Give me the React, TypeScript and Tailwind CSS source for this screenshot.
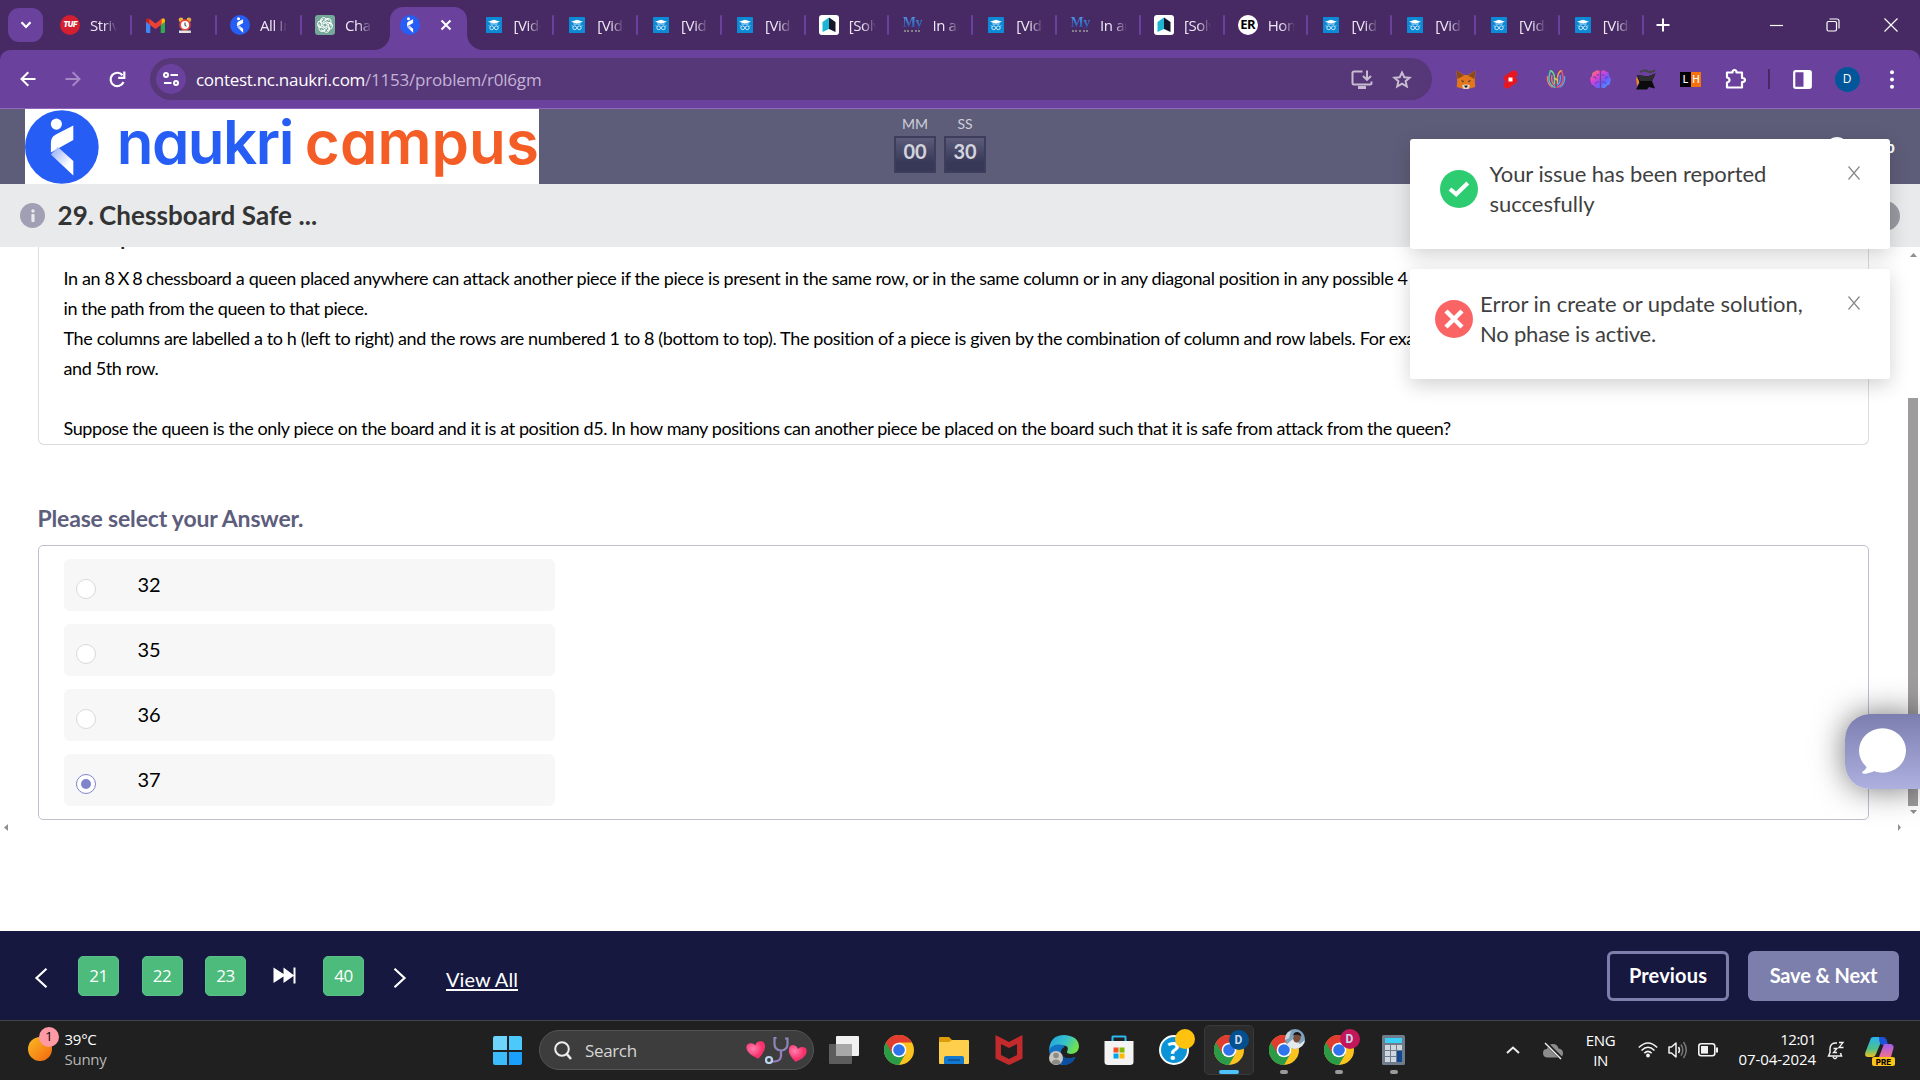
import type { ReactNode } from "react";

/* ---------- favicons ---------- */

function NaukriMark({ size }: { size: number }) {
  return (
    <svg width={size} height={size} viewBox="0 0 74 74">
      <defs>
        <linearGradient id="nk" x1="0" y1="0" x2="1" y2="1">
          <stop offset="0" stopColor="#8ba6f8" />
          <stop offset="0.7" stopColor="#fff" />
        </linearGradient>
      </defs>
      <circle cx="37" cy="37" r="37" fill="#265df5" />
      <circle cx="31.5" cy="14" r="5.6" fill="#fff" />
      <path d="M48.500 15.500V30L26 42.500V33Q26 27 31 24.500Z" fill="#fff" />
      <path d="M33 37L48.500 51V65.500L26 44.500Z" fill="url(#nk)" />
    </svg>
  );
}

function TufIcon() {
  return (
    <div className="flex size-5 items-center justify-center rounded-full bg-[#d41f30] font-['Inter'] text-[7.500px] font-black italic text-white">
      TUF
    </div>
  );
}

function GmailIcon() {
  return (
    <svg width="19" height="15" viewBox="0 0 19 15">
      <path d="M0 2.500V13.700Q0 15 1.300 15H4.300V5.500Z" fill="#4285f4" />
      <path d="M19 2.500V13.700Q19 15 17.700 15H14.700V5.500Z" fill="#34a853" />
      <path d="M0 2.200Q0 .3 2 .3L4.300 1.500V7L0 3.800Z" fill="#c5221f" />
      <path d="M19 2.200Q19 .3 17 .3L14.700 1.500V7L19 3.800Z" fill="#fbbc04" />
      <path d="M3.300 .8L9.500 5.600L15.700 .8V6.400L9.500 11L3.300 6.400Z" fill="#ea4335" />
    </svg>
  );
}

function ClockIcon() {
  return (
    <svg width="14" height="16" viewBox="0 0 14 16">
      <circle cx="3" cy="2.800" r="2.400" fill="#e8b33c" />
      <circle cx="11" cy="2.800" r="2.400" fill="#e8b33c" />
      <circle cx="7" cy="8" r="5.800" fill="#e5493d" />
      <circle cx="7" cy="8" r="4" fill="#fff" />
      <path d="M7 5.500V8.500L8.500 9.200" stroke="#333" strokeWidth="1" fill="none" />
      <rect x="1" y="13.500" width="12" height="2.500" fill="#e8e4e0" />
    </svg>
  );
}

function GptIcon() {
  return (
    <svg width="20" height="20" viewBox="0 0 20 20">
      <rect width="20" height="20" rx="3" fill="#75a899" />
      <g fill="none" stroke="#fff" strokeWidth="1">
        {[0, 60, 120, 180, 240, 300].map((a) => (
          <path key={a} d="M5.600 8V5.800A3.100 3.100 0 0 1 11 3.700L14 5.400M8 10.900V6.900L11.500 4.900" transform={`rotate(${a} 10 10)`} />
        ))}
      </g>
    </svg>
  );
}

function GfgIcon() {
  return (
    <svg width="16" height="16" viewBox="0 0 16 16">
      <rect width="16" height="16" rx=".6" fill="#0c8ad6" />
      <path d="M2 4.800L8 2.800L14 4.800L8 6.800Z" fill="#fff" />
      <path d="M4.500 6.200V7.600L11.500 7.600V6.200L8 7.300Z" fill="#d8efff" />
      <circle cx="5.700" cy="10.800" r="1.900" fill="none" stroke="#cdeaff" />
      <circle cx="10.300" cy="10.800" r="1.900" fill="none" stroke="#cdeaff" />
      <path d="M3 8.500L4 9.500M13 8.500L12 9.500" stroke="#fff" />
    </svg>
  );
}

function SolIcon() {
  return (
    <svg width="20" height="20" viewBox="0 0 20 20">
      <rect width="20" height="20" rx="3" fill="#fff" />
      <path d="M10 2.500V14L3.500 17V7Z" fill="#1fb5d2" />
      <path d="M10 2.500L16.500 7V17L10 14Z" fill="#16162c" />
    </svg>
  );
}

function MyIcon() {
  return (
    <div className="flex h-5 w-[18px] flex-col items-center pt-px">
      <span className="bg-gradient-to-b from-[#4f9ae8] to-[#2a4ba8] bg-clip-text font-['Liberation_Serif'] text-[14px] leading-[13px] font-bold text-transparent">
        My
      </span>
      <span className="mt-px h-[2px] w-4 border-t-2 border-dotted border-[#85808c]" />
    </div>
  );
}

function ErIcon() {
  return (
    <div className="flex size-5 items-center justify-center rounded-full bg-white font-['Open_Sans'] text-[13px] font-bold tracking-[-0.5px] text-black">
      ER
    </div>
  );
}

/* ---------- browser chrome ---------- */

function Tab({ icon, title, sep = true, wide = false }: { icon: ReactNode; title: ReactNode; sep?: boolean; wide?: boolean }) {
  return (
    <div className={(wide ? "w-[85px]" : "w-[83.8px]") + " flex h-5 shrink-0 items-center pl-[13px]"}>
      <div className="flex w-5 shrink-0 justify-center">{icon}</div>
      <div className="ml-[10px] w-[27px] shrink-0 overflow-hidden whitespace-nowrap text-[15px] leading-5 text-[#eee8f4] [mask-image:linear-gradient(to_right,black_50%,transparent)]">
        {title}
      </div>
      {sep && <div className="ml-auto h-5 w-[2px] rounded bg-[#6b419e]" />}
    </div>
  );
}

function TabStrip() {
  const rest: [ReactNode, string][] = [
    [<GfgIcon />, "[Vide"],
    [<GfgIcon />, "[Vide"],
    [<GfgIcon />, "[Vide"],
    [<GfgIcon />, "[Vide"],
    [<SolIcon />, "[Solv"],
    [<MyIcon />, "In ar"],
    [<GfgIcon />, "[Vide"],
    [<MyIcon />, "In ar"],
    [<SolIcon />, "[Solv"],
    [<ErIcon />, "Hom"],
    [<GfgIcon />, "[Vide"],
    [<GfgIcon />, "[Vide"],
    [<GfgIcon />, "[Vide"],
    [<GfgIcon />, "[Vide"],
  ];
  return (
    <div className="flex h-[50px] shrink-0 items-center bg-[#472963] font-['Open_Sans'] tracking-[-0.4px]">
      <div className="ml-2 flex h-[34px] w-[35px] shrink-0 items-center justify-center rounded-[11px] bg-[#6b419e]">
        <svg width="12" height="8" viewBox="0 0 12 8" fill="none" stroke="#fff" strokeWidth="2.200">
          <path d="M1.500 1.200L6 6L10.500 1.200" />
        </svg>
      </div>
      <div className="w-1 shrink-0" />
      <Tab wide icon={<TufIcon />} title="Strive" />
      <Tab wide icon={<GmailIcon />} title={<span className="flex items-center gap-2"><span className="ml-[3px]"><ClockIcon /></span>.</span>} />
      <Tab wide icon={<NaukriMark size={20} />} title="All In" />
      <Tab wide icon={<GptIcon />} title="Chat" sep={false} />
      <div className="relative ml-[3px] flex h-[43px] w-[77px] shrink-0 items-center self-end rounded-t-[13px] bg-[#6b419e] pb-[7px]">
        <svg className="absolute bottom-0 -left-4" width="16" height="16"><path d="M16 0V16H0A16 16 0 0 0 16 0" fill="#6b419e" /></svg>
        <svg className="absolute -right-4 bottom-0" width="16" height="16"><path d="M0 0V16H16A16 16 0 0 1 0 0" fill="#6b419e" /></svg>
        <div className="ml-[10px]"><NaukriMark size={20} /></div>
        <svg className="ml-[20px]" width="12" height="12" viewBox="0 0 12 12" stroke="#fff" strokeWidth="2"><path d="M1.500 1.500L10.500 10.500M10.500 1.500L1.500 10.500" /></svg>
      </div>
      <div className="w-[3.500px] shrink-0" />
      {rest.map(([icon, title], i) => (
        <Tab key={i} icon={icon} title={title} />
      ))}
      <svg className="ml-[12.500px] shrink-0" width="14" height="14" viewBox="0 0 14 14" stroke="#fff" strokeWidth="2"><path d="M7 .5V13.500M.5 7H13.500" /></svg>
      <div className="ml-auto flex items-center">
        <svg className="mr-[43px]" width="13" height="13" stroke="#fff" strokeWidth="1.200"><path d="M0 6.500H13" /></svg>
        <svg className="mr-[44px]" width="14" height="14" fill="none" stroke="#fff" strokeWidth="1.200">
          <rect x="1" y="3.500" width="9.500" height="9.500" rx="1.500" />
          <path d="M3.500 1H11Q13 1 13 3V10.500" />
        </svg>
        <svg className="mr-[22px]" width="14" height="14" stroke="#fff" strokeWidth="1.200"><path d="M.5 .5L13.500 13.500M13.500 .5L.5 13.500" /></svg>
      </div>
    </div>
  );
}

function Fox() {
  return (
    <svg width="20" height="19" viewBox="0 0 20 19">
      <path d="M.5 .5L8 5H12L19.500 .5L18.800 12L19.300 17L14 18.500H6L.7 17L1.200 12Z" fill="#e2761b" />
      <path d="M.5 .5L8 5.500L1.500 9ZM19.500 .5L12 5.500L18.500 9Z" fill="#8a4a1a" />
      <path d="M6 15.500L8.500 14.500H11.500L14 15.500L12.500 19H7.500Z" fill="#e0d8d0" />
      <path d="M8.300 15.500H11.700L11 17.500H9Z" fill="#161616" />
      <path d="M5 10L8 11L7 12.500ZM15 10L12 11L13 12.500Z" fill="#3a3040" />
    </svg>
  );
}
function ShortsIcon() {
  return (
    <svg width="15" height="19" viewBox="0 0 15 19">
      <path d="M1.500 6L9.500 .8Q13 -.3 14.300 3Q14.800 6 12.300 7.600Q15.500 9.500 13.800 12.600L5.500 18.300Q2 19.500 .7 16Q.2 13 2.700 11.400Q-.8 9 1.500 6Z" fill="#e8171f" />
      <rect x="5.500" y="7.500" width="4" height="4" fill="#fff" />
    </svg>
  );
}
function KnotIcon() {
  return (
    <svg width="20" height="20" viewBox="0 0 20 20" fill="none" strokeWidth="1.400">
      <path d="M4.500 1.500Q2 9 3.500 13T9.500 18.500" stroke="#4fd0b0" />
      <path d="M15.500 1.500Q18 9 16.500 13T10.500 18.500" stroke="#f0566a" />
      <path d="M4.500 1.500Q8 3 8.500 8.500V15" stroke="#5fe07a" />
      <path d="M15.500 1.500Q12 3 11.500 8.500V15" stroke="#f0a040" />
      <path d="M1.500 7Q.5 15 6.500 18.500M6 6Q4.500 13 9 16.500" stroke="#e57a6a" />
      <path d="M18.500 7Q19.500 15 13.500 18.500M14 6Q15.500 13 11 16.500" stroke="#55a5e0" />
      <path d="M8.500 9L11.500 11.500" stroke="#e6d36a" />
    </svg>
  );
}
function BrainIcon() {
  return (
    <svg width="21" height="19" viewBox="0 0 21 19">
      <defs>
        <linearGradient id="br" x1="0" y1="0" x2="1" y2="1">
          <stop offset="0" stopColor="#ff8a3c" />
          <stop offset=".35" stopColor="#e040d0" />
          <stop offset=".65" stopColor="#6a5cff" />
          <stop offset="1" stopColor="#3fb0ff" />
        </linearGradient>
      </defs>
      <path d="M9.800 1Q7 -.8 5 1.500Q1.500 2.500 2 6Q-.8 8.500 .8 11.500Q.8 15 4 15.500Q6.500 19.500 9.800 17.500ZM11.200 1Q14 -.8 16 1.500Q19.500 2.500 19 6Q21.800 8.500 20.200 11.500Q20.200 15 17 15.500Q14.500 19.500 11.200 17.500Z" fill="url(#br)" />
      <path d="M3 7Q6 6 6 9M9 5H6.500M9 12Q6 11 5 14M18 7Q15 6 15 9M12 5H14.500M12 12Q15 11 16 14" stroke="#5b3fa8" strokeWidth=".9" fill="none" />
    </svg>
  );
}
function HatIcon() {
  return (
    <svg width="22" height="21" viewBox="0 0 22 21">
      <path d="M1 8L5 12L2 17Z" fill="#f08a1d" />
      <path d="M2 6L13 7.500L20.500 4.500L17 12L20 19.500L14 18L12 20.500H1L4.500 14Z" fill="#0c0c0e" />
      <path d="M2 6L13 7.500L20.500 4.500L17 12H5Z" fill="#2e2e32" />
      <path d="M5 3Q10 .5 13 2.500Q17 4 20 1" stroke="#444" strokeWidth="2" fill="none" />
    </svg>
  );
}

function AddressBar() {
  const ext = [
    <Fox />,
    <ShortsIcon />,
    <KnotIcon />,
    <BrainIcon />,
    <HatIcon />,
    <div className="flex h-[15px] w-[21px] font-['Inter'] text-[10px] leading-[15px] font-medium text-white">
      <span className="w-[11px] bg-black text-center">L</span>
      <span className="w-[10px] bg-[#f9700f] text-center">H</span>
    </div>,
    <svg width="22" height="22" viewBox="0 0 22 22" fill="none" stroke="#fff" strokeWidth="2.200" strokeLinejoin="round">
      <path d="M2 4.500H7.500Q7.500 2 9.500 2T11.500 4.500H17V10Q20 10 20 12T17 14V19.500H2V14.500Q4.500 14 4.500 12T2 9.500Z" />
    </svg>,
  ];
  return (
    <div className="bg-[#472963]">
      <div className="flex h-[59px] shrink-0 items-center rounded-t-[10px] border-b border-[#9166bd] bg-[#6b419e]">
        <svg className="ml-[20px]" width="16" height="16" viewBox="0 0 16 16" fill="none" stroke="#fff" strokeWidth="2"><path d="M15.500 8H1.800M8.300 1.200L1.500 8L8.300 14.800" /></svg>
        <svg className="ml-[29px]" width="16" height="16" viewBox="0 0 16 16" fill="none" stroke="#a589c6" strokeWidth="2"><path d="M.5 8H14.200M7.700 1.200L14.500 8L7.700 14.800" /></svg>
        <svg className="ml-[28px]" width="17" height="17" viewBox="0 0 17 17" fill="none" stroke="#fff" strokeWidth="2.200">
          <path d="M14.500 11A6.700 6.700 0 1 1 13.500 4.200" />
          <path d="M15.300 .5V6.800H9.200" />
        </svg>
        <div className="ml-[24px] flex h-[42px] w-[1282px] items-center rounded-full bg-[#563777]">
          <div className="ml-[6px] flex size-[30px] items-center justify-center rounded-full bg-[#6b419e]">
            <svg width="16" height="14" viewBox="0 0 16 14" fill="none" stroke="#fff" strokeWidth="2">
              <circle cx="3" cy="3" r="2" /><path d="M7.500 3H15" />
              <circle cx="13" cy="11" r="2" /><path d="M1 11H8.500" />
            </svg>
          </div>
          <div className="ml-[10px] pt-px font-['Open_Sans'] text-[17px] leading-6 whitespace-nowrap text-[#c4b3d8]">
            <span className="tracking-[-0.29px] text-white">contest.nc.naukri.com</span><span className="tracking-[-0.22px]">/1153/problem/r0l6gm</span>
          </div>
          <svg className="ml-auto" width="22" height="19" viewBox="0 0 22 19" fill="none" stroke="#c8bdd0" strokeWidth="2">
            <path d="M11.500 1.500H3Q1.500 1.500 1.500 3V13Q1.500 14.500 3 14.500H19Q20.500 14.500 20.500 13V11.500" />
            <path d="M16 .5V9.500M12 6L16 9.800L20 6" />
            <path d="M7 17.500H15" strokeWidth="3" />
          </svg>
          <svg className="mr-[20px] ml-[19px]" width="20" height="19" viewBox="0 0 20 19" fill="none" stroke="#c8bdd0" strokeWidth="2">
            <path d="M10 2.500L12.300 7.200L17.600 7.700L13.600 11.200L14.800 16.500L10 13.700L5.200 16.500L6.400 11.200L2.400 7.700L7.700 7.200Z" />
          </svg>
        </div>
        <div className="ml-[11px] flex">
          {ext.map((e, i) => (
            <div key={i} className="flex h-6 w-[45px] items-center justify-center">{e}</div>
          ))}
        </div>
        <div className="ml-[10px] h-5 w-[1.500px] bg-[#472963]" />
        <svg className="ml-[23px]" width="19" height="19" viewBox="0 0 19 19">
          <rect x="1.200" y="1.200" width="16.600" height="16.600" rx="1.500" fill="none" stroke="#fff" strokeWidth="2.200" />
          <rect x="10.500" y="1" width="7.500" height="17" fill="#fff" />
        </svg>
        <div className="ml-[23px] flex size-[25px] items-center justify-center rounded-full bg-[#02579b] font-['Open_Sans'] text-[12px] text-white">D</div>
        <svg className="ml-[30px]" width="4" height="19" fill="#fff"><circle cx="2" cy="2.200" r="2" /><circle cx="2" cy="9.500" r="2" /><circle cx="2" cy="16.800" r="2" /></svg>
      </div>
    </div>
  );
}

/* ---------- page ---------- */

function TimerBox({ label, value }: { label: string; value: string }) {
  return (
    <div className="flex w-[42px] flex-col items-center">
      <div className="text-[14px] leading-[17px] text-[#cfcfdb]">{label}</div>
      <div className="mt-[4px] flex h-[37px] w-full justify-center border-2 border-[#3d3d5c] bg-gradient-to-b from-[#5c5c7a] to-[#373757] to-75% text-[20px] leading-[27px] font-bold text-[#d3d3de]">
        {value}
      </div>
    </div>
  );
}

function SiteHeader() {
  return (
    <div className="relative flex h-[75px] shrink-0 bg-[#5d5d79]">
      <div className="ml-[25px] flex h-[75px] w-[514px] items-center overflow-hidden bg-white">
        <NaukriMark size={74} />
        <div className="ml-[18px] pb-[8px] font-['Inter'] text-[60px] leading-[67px] font-semibold whitespace-nowrap text-[#265df5] [font-feature-settings:'cv11']">
          <span className="tracking-[-1.500px]">naukri</span>
          <span className="ml-[12px] tracking-[0.1px] text-[#f55d26]">campus</span>
        </div>
      </div>
      <div className="ml-[355px] flex gap-[8px] pt-[6px]">
        <TimerBox label="MM" value="00" />
        <TimerBox label="SS" value="30" />
      </div>
      <svg className="absolute top-[28px] left-[1826px]" width="22" height="22" fill="none" stroke="#fff" strokeWidth="2"><circle cx="11" cy="11" r="10" /></svg>
      <div className="absolute top-[24px] right-[25px] text-[17px] leading-[28px] font-bold text-white">Help</div>
    </div>
  );
}

function TitleBar() {
  return (
    <div className="flex h-[63px] shrink-0 items-center bg-[#e8eaeb]">
      <div className="ml-[20px] flex size-[25px] items-center justify-center rounded-full bg-[#a0a0b5]">
        <svg width="4" height="13" fill="#e8eaeb"><circle cx="2" cy="2" r="1.700" /><rect x=".4" y="5" width="3.200" height="8" rx="1" /></svg>
      </div>
      <h1 className="ml-[12.500px] pb-[2px] text-[26px] leading-[32px] font-bold tracking-[0.08px] text-[#333]">29. <span className="-ml-[1.500px]">Chessboard</span> Safe ...</h1>
      <div className="mr-[20px] ml-auto size-[30px] rounded-full bg-[#9a9aa2]" />
    </div>
  );
}

function Problem() {
  return (
    <div className="ml-[38px] h-[198px] w-[1831px] shrink-0 overflow-hidden rounded-b-[6px] border border-t-0 border-[#dcdcdf]">
      <div className="-mt-[25px] ml-[24px] text-[20px] leading-[30px] font-bold tracking-[0.1px] text-[#222]">Description</div>
      <div className="mt-[11px] ml-[24.500px] w-[2000px] text-[18px] leading-[30px] tracking-[-0.385px] whitespace-nowrap text-black">
        <p className="tracking-[-0.365px]">In an <span className="tracking-[-0.9px]">8 X 8</span> chessboard a queen placed anywhere can attack another piece if the piece is present in the same row, or in the same column or in any diagonal position in any possible 4</p>
        <p>in the path from the queen to that piece.</p>
        <p className="tracking-[-0.365px]">The columns are labelled a to h (left to right) and the rows are numbered 1 to 8 (bottom to top). The position of a piece is given by the combination of column and row labels. For exa</p>
        <p>and 5th row.</p>
        <p>&nbsp;</p>
        <p>Suppose the queen is the only piece on the board and it is at position d5. In how many positions can another piece be placed on the board such that it is safe from attack from the queen?</p>
      </div>
    </div>
  );
}

function Option({ value, checked = false }: { value: string; checked?: boolean }) {
  return (
    <div className="flex h-[52px] w-[491px] items-center rounded-[6px] bg-[#f7f7f7]">
      <div className={(checked ? "border-[#8184cc]" : "border-[#d9d9d9]") + " mt-[8px] ml-[12px] flex size-5 items-center justify-center rounded-full border bg-white"}>
        {checked && <div className="size-[10px] rounded-full bg-[#8184cc]" />}
      </div>
      <div className="ml-[41.500px] pb-[2px] text-[20px] leading-[28px] text-black">{value}</div>
    </div>
  );
}

function Toast({ kind, children }: { kind: "ok" | "error"; children: ReactNode }) {
  const ok = kind === "ok";
  return (
    <div className="flex h-[110px] w-[480px] rounded-[3px] bg-white shadow-[0_6px_20px_rgba(0,0,0,0.18)]">
      <div className={(ok ? "ml-[30px] bg-[#2ecc71]" : "ml-[25px] bg-[#fb6465]") + " mt-[31px] flex size-[38px] items-center justify-center rounded-full"}>
        {ok ? (
          <svg width="22" height="16" viewBox="0 0 22 16" fill="none" stroke="#fff" strokeWidth="4"><path d="M2 8L8.200 13.300L19.800 2" /></svg>
        ) : (
          <svg width="20" height="20" viewBox="0 0 20 20" fill="none" stroke="#fff" strokeWidth="4.500"><path d="M2 2L18 18M18 2L2 18" /></svg>
        )}
      </div>
      <div className={(ok ? "ml-[11.500px]" : "ml-[7px]") + " pt-[20px] text-[22px] leading-[30px] whitespace-nowrap text-[#3f3f3f]"}>
        {children}
      </div>
      <svg className="mt-[27px] mr-[30px] ml-auto" width="12" height="14" stroke="#888" strokeWidth="1.200"><path d="M.5 .5L11.500 13.500M11.500 .5L.5 13.500" /></svg>
    </div>
  );
}

function ChatWidget() {
  return (
    <div className="absolute top-[714px] right-0 flex h-[75px] w-[75px] items-center rounded-l-[25px] bg-gradient-to-b from-[#7b7eae] to-[#aeb1e0] shadow-[0_0_32px_rgba(0,0,0,0.55)]">
      <svg className="mb-[2px] ml-[13px]" width="48" height="46" viewBox="0 0 48 46" fill="#fff">
        <ellipse cx="24.500" cy="22.500" rx="23.500" ry="22.300" />
        <path d="M9 37Q9 41 4 44Q4 46 8 45.700Q14 45 18 42Z" />
      </svg>
    </div>
  );
}

function Num({ n }: { n: string }) {
  return <div className="flex h-[40px] w-[41px] items-center justify-center rounded-[5px] border border-[#5dbf8a] bg-[#4cbb7b] font-['Open_Sans'] text-[17px] tracking-[-0.5px] text-white">{n}</div>;
}

function BottomNav() {
  return (
    <div className="flex h-[89px] shrink-0 bg-[#161840] pt-[25px] text-white">
      <svg className="mt-[12px] ml-[34px]" width="14" height="20" viewBox="0 0 14 20" fill="none" stroke="#fff" strokeWidth="2.200"><path d="M12.500 .8L2.500 10L12.500 19.200" /></svg>
      <div className="ml-[30px] flex gap-[22.500px]">
        <Num n="21" />
        <Num n="22" />
        <Num n="23" />
      </div>
      <svg className="mt-[11px] ml-[27px]" width="23" height="17" viewBox="0 0 23 17" fill="#fff"><path d="M.5 .5L10.500 7V.5L20.500 8V.5H22.500V16.500H20.500V9L10.500 16V9.500L.5 16Z" /></svg>
      <div className="ml-[27px]"><Num n="40" /></div>
      <svg className="mt-[12px] ml-[29px]" width="14" height="20" viewBox="0 0 14 20" fill="none" stroke="#fff" strokeWidth="2.200"><path d="M1.500 .8L11.500 10L1.500 19.200" /></svg>
      <div className="mt-[8px] ml-[39px] text-[20px] leading-[30px] tracking-[0.06px] underline decoration-2 underline-offset-[2px]">View All</div>
      <div className="-mt-[5px] mr-[21px] ml-auto flex gap-[19px] text-[20px] font-bold">
        <div className="flex h-[50px] w-[122px] items-center justify-center rounded-[6px] border-[3px] border-[#7c7fac] pb-[2px] tracking-[0.15px]">Previous</div>
        <div className="flex h-[50px] w-[151px] items-center justify-center rounded-[6px] bg-[#7c7fac] pb-[2px] tracking-[-0.15px]">Save &amp; Next</div>
      </div>
    </div>
  );
}

/* ---------- taskbar ---------- */

function ChromeLogo() {
  return (
    <svg width="30" height="30" viewBox="0 0 30 30">
      <circle cx="15" cy="15" r="15" fill="#fcc31e" />
      <path d="M15 15L2 7.500A15 15 0 0 0 15 30L21.500 18.700Z" fill="#2a9c48" />
      <path d="M15 7.500H28A15 15 0 0 0 2 7.500L8.500 18.700Z" fill="#e03c2f" />
      <circle cx="15" cy="15" r="7.300" fill="#fff" />
      <circle cx="15" cy="15" r="5.800" fill="#2f74ea" />
    </svg>
  );
}

function TaskIcon({ children, active = false, running = false }: { children: ReactNode; active?: boolean; running?: boolean }) {
  return (
    <div className={(active ? "border border-[#393939] bg-[#2c2c2c]" : "") + " relative mx-[2.500px] flex h-[50px] w-[50px] shrink-0 items-center justify-center rounded-[5px]"}>
      {children}
      {active && <div className="absolute bottom-0 left-1/2 h-[4px] w-5 -translate-x-1/2 rounded-full bg-[#4cc2ff]" />}
      {running && <div className="absolute bottom-px left-1/2 h-[4px] w-2 -translate-x-1/2 rounded-full bg-[#9a9a9a]" />}
    </div>
  );
}

function Badge({ children, className }: { children?: ReactNode; className: string }) {
  return (
    <div className={className + " absolute top-[4px] right-[4px] flex size-5 items-center justify-center overflow-hidden rounded-full font-['Roboto'] text-[12px] font-bold text-[#c9d9ea]"}>
      {children}
    </div>
  );
}

function Heart({ size, className }: { size: number; className: string }) {
  return (
    <svg className={className} width={size} height={size} viewBox="0 0 20 20">
      <defs>
        <radialGradient id="hg" cx=".35" cy=".35"><stop offset="0" stopColor="#ff7fae" /><stop offset="1" stopColor="#f8316c" /></radialGradient>
      </defs>
      <path d="M10 18Q1 12 1 6.500Q1 2 5.500 2Q8.500 2 10 5Q11.500 2 14.500 2Q19 2 19 6.500Q19 12 10 18Z" fill="url(#hg)" />
    </svg>
  );
}

function Taskbar() {
  return (
    <div className="flex h-[60px] shrink-0 border-t border-[#454545] bg-[#202020] font-['Open_Sans'] text-white">
      <div className="flex w-[480px] pt-[6px]">
        <div className="relative ml-[28px] h-[48px] w-[36.500px]">
          <div className="absolute top-[10px] size-[24px] rounded-full bg-gradient-to-br from-[#f7bb25] to-[#f2620c]" />
          <div className="absolute top-0 left-[11px] flex size-5 items-center justify-center rounded-full bg-[#ff99a4] text-[13px] text-black">1</div>
        </div>
        <div className="pt-[2px] text-[15px] leading-5 tracking-[-0.25px]">
          <p>39°C</p>
          <p className="text-[#b8b8b8]">Sunny</p>
        </div>
      </div>
      <div className="mt-[15px] ml-[13px] grid h-[29px] w-[29px] grid-cols-2 gap-[2px]">
        <div className="rounded-tl-[2px] bg-[#6fd4fb]" />
        <div className="rounded-tr-[2px] bg-[#4cc8fb]" />
        <div className="rounded-bl-[2px] bg-[#3cbcfa]" />
        <div className="rounded-br-[2px] bg-[#1a9ffa]" />
      </div>
      <div className="mt-[9px] ml-[17px] flex h-[40px] w-[275px] items-center rounded-full border border-[#545454] bg-[#3d3d3d]">
        <svg className="ml-[14px]" width="18" height="19" viewBox="0 0 18 19" fill="none" stroke="#eee" strokeWidth="2"><circle cx="8" cy="8" r="6.800" /><path d="M12.800 13L17 18" strokeWidth="2.600" /></svg>
        <span className="ml-[13px] pt-px text-[17px] tracking-[-0.35px] text-[#d6d6d6]">Search</span>
        <div className="mr-[6px] ml-auto flex items-center">
          <Heart size={21} className="-rotate-12" />
          <svg className="-mx-[4px]" width="28" height="28" viewBox="0 0 28 28" fill="none" strokeWidth="2.200">
            <path d="M13.500 2H11.500V8Q11.500 14 18 14.500Q24.500 14 24.500 8V2.500H22" stroke="#8a86b8" />
            <path d="M18 14.500V20Q17.500 25 12 25.500H8" stroke="#9a7ec0" />
            <circle cx="6" cy="24" r="3" stroke="#b9d5ee" />
          </svg>
          <Heart size={20} className="mt-[8px] rotate-12" />
        </div>
      </div>
      <div className="mt-[4px] ml-[2px] flex">
        <TaskIcon>
          <div className="relative h-[28px] w-[30px]">
            <div className="absolute bottom-0 left-0 h-[20px] w-[23px] rounded-[1px] bg-[#5d5d5d]" />
            <div className="absolute top-0 right-0 h-[20px] w-[23px] rounded-[1px] bg-[#f1f1f1]" />
            <div className="absolute top-[8px] left-[7px] h-[12px] w-[16px] bg-[#a8a8a8]" />
          </div>
        </TaskIcon>
        <TaskIcon><ChromeLogo /></TaskIcon>
        <TaskIcon>
          <svg width="30" height="27" viewBox="0 0 30 27">
            <path d="M0 1Q0 0 1 0H10L13 3V8H0Z" fill="#dc9b08" />
            <path d="M0 5H10L13 3H29Q30 3 30 4V26Q30 27 29 27H1Q0 27 0 26Z" fill="#fdcf4c" />
            <path d="M5 27V21Q5 19 7 19H23Q25 19 25 21V27Z" fill="#1279cf" />
            <path d="M9 23H21" stroke="#0a4f94" strokeWidth="1.500" />
          </svg>
        </TaskIcon>
        <TaskIcon>
          <svg width="28" height="30" viewBox="0 0 28 30"><path d="M.5 0L14 7L27.500 0V23.500L14 30L.5 23.500ZM6 9V20L14 24L22 20V9L14 13Z" fill="#c32a2c" fillRule="evenodd" /></svg>
        </TaskIcon>
        <TaskIcon>
          <svg width="30" height="30" viewBox="0 0 30 30">
            <defs>
              <linearGradient id="eg" x1="0" y1="0" x2="1" y2=".4"><stop offset="0" stopColor="#1f9fe4" /><stop offset=".6" stopColor="#37c3c9" /><stop offset="1" stopColor="#6fe04e" /></linearGradient>
            </defs>
            <path d="M0 15Q1 0 15.500 0Q30 1 30 12Q29 19 21.500 19Q16.500 18.500 18.500 15.500Q20 11 15 10.500Q8 10 0 15Z" fill="url(#eg)" />
            <path d="M0 15Q3 9 11 9.500Q16 10.500 15.500 12Q11 14 12 19Q15 26 26.500 22Q23 30 14 30Q1 29 0 15Z" fill="#1273c4" />
            <path d="M12 18Q15 26 26.500 22Q23 30 14 30Q9 25 12 18Z" fill="#0c4fa0" />
            <circle cx="7" cy="23" r="7" fill="#c9c5c1" /><circle cx="7" cy="20.500" r="2.800" fill="#8d8984" /><path d="M2.500 28Q3 24.500 7 24.500T11.500 28Q7 31 2.500 28" fill="#8d8984" />
          </svg>
        </TaskIcon>
        <TaskIcon>
          <svg width="30" height="30" viewBox="0 0 30 30">
            <path d="M8.500 8V2Q8.500 1.500 9 1.500H21Q21.500 1.500 21.500 2V8" stroke="#2cb8f0" strokeWidth="2" fill="none" />
            <path d="M.5 6H29.500V27Q29.500 30 26 30H4Q.5 30 .5 27Z" fill="#f3f3f3" />
            <path d="M9.500 12.500H14.500V17.500H9.500Z" fill="#f25022" /><path d="M15.500 12.500H20.500V17.500H15.500Z" fill="#7fba00" />
            <path d="M9.500 18.500H14.500V23.500H9.500Z" fill="#00a4ef" /><path d="M15.500 18.500H20.500V23.500H15.500Z" fill="#ffb900" />
          </svg>
        </TaskIcon>
        <TaskIcon>
          <div className="flex size-[30px] items-center justify-center rounded-full border-2 border-white bg-[#0b93d8] text-[25px] leading-none font-bold">?</div>
          <Badge className="bg-[#ffc20e]" />
        </TaskIcon>
        <TaskIcon active><ChromeLogo /><Badge className="bg-[#02508f]">D</Badge></TaskIcon>
        <TaskIcon running>
          <ChromeLogo />
          <Badge className="bg-[#7fa3bf]">
            <svg width="20" height="20" viewBox="0 0 20 20">
              <path d="M0 4L6 2L4 9L0 11Z" fill="#c9d6e0" />
              <path d="M1 16L8 10L15 15L20 11V20H0Z" fill="#e3e8ec" />
              <ellipse cx="12" cy="9" rx="3.600" ry="4.600" fill="#7a4c38" transform="rotate(20 12 9)" />
              <path d="M8 6.500Q9 2.500 12.500 3T16.500 7.500Q13 4.500 8 6.500" fill="#1c1a1e" />
            </svg>
          </Badge>
        </TaskIcon>
        <TaskIcon running><ChromeLogo /><Badge className="bg-[#c2185b]">D</Badge></TaskIcon>
        <TaskIcon running>
          <svg width="23" height="30" viewBox="0 0 23 30">
            <rect width="23" height="30" rx="1.500" fill="#6f7c8b" />
            <rect x="3" y="3" width="17" height="5" fill="#3bd0f5" />
            <g fill="#cfd6dd"><rect x="3" y="10" width="5" height="5" /><rect x="9" y="10" width="5" height="5" /><rect x="15" y="10" width="5" height="5" /><rect x="3" y="16" width="5" height="5" /><rect x="9" y="16" width="5" height="5" /><rect x="3" y="22" width="5" height="5" /><rect x="9" y="22" width="5" height="5" /></g>
            <rect x="15" y="16" width="5" height="11" fill="#12488f" />
          </svg>
        </TaskIcon>
      </div>
      <div className="ml-auto flex text-[15px] leading-5">
        <svg className="mt-[25px]" width="14" height="8" viewBox="0 0 14 8" fill="none" stroke="#eee" strokeWidth="2"><path d="M1 7L7 1.500L13 7" /></svg>
        <svg className="mt-[20px] ml-[22px]" width="22" height="19" viewBox="0 0 22 19">
          <path d="M5 16.500Q1 16 1 12Q1 8 5 8Q6.500 3 11 3Q15.500 3 16.500 7.500Q21 8 21 12Q21 16 17.500 16.500Z" fill="#8c8c8c" />
          <path d="M3.500 1.500L19.500 17.500" stroke="#202020" strokeWidth="3.500" /><path d="M3 2L19 18" stroke="#f0f0f0" strokeWidth="1.400" />
        </svg>
        <div className="mt-[9px] ml-[22px] w-[30px] text-center tracking-[-0.4px]"><p>ENG</p><p>IN</p></div>
        <svg className="mt-[21px] ml-[22px]" width="20" height="16" viewBox="0 0 20 16" fill="none" stroke="#f2f2f2" strokeWidth="1.600">
          <path d="M.8 5.500Q10 -3.500 19.200 5.500M3.500 8.500Q10 2 16.500 8.500M6.300 11.300Q10 7.500 13.700 11.300" /><circle cx="10" cy="13.500" r="1.900" fill="#f2f2f2" stroke="none" />
        </svg>
        <svg className="mt-[20px] ml-[10px]" width="20" height="18" viewBox="0 0 20 18" fill="none" stroke="#f2f2f2" strokeWidth="1.500">
          <path d="M1 6H3.500L8 2V16L3.500 12H1Z" strokeLinejoin="round" /><path d="M10.500 6Q12.500 9 10.500 12" /><path d="M13 3.500Q16.500 9 13 14.500M15.500 1Q21 9 15.500 17" stroke="#777" />
        </svg>
        <svg className="mt-[22px] ml-[10px]" width="20" height="14" viewBox="0 0 20 14"><rect x=".8" y=".8" width="16" height="12" rx="2.500" fill="none" stroke="#f2f2f2" strokeWidth="1.600" /><rect x="3" y="3" width="7" height="7.600" fill="#f2f2f2" /><path d="M18 4.500H20V9.500H18Z" fill="#f2f2f2" /></svg>
        <div className="mt-[8px] ml-[21px] w-[77.500px] text-right whitespace-nowrap"><p className="tracking-[-0.5px]">12:01</p><p className="tracking-[-0.08px]">07-04-2024</p></div>
        <svg className="mt-[20px] ml-[11px]" width="18" height="19" viewBox="0 0 18 19" fill="none" stroke="#f2f2f2" strokeWidth="1.500">
          <path d="M10 2Q3 1.500 3 8V11.500L1.500 15H14.500L13.500 12M6 16Q8 19.500 10 16" />
          <path d="M6.500 7.500H10L6.500 11.500H10M12 1.500H16L12 6.500H16.500" strokeWidth="1.300" />
        </svg>
        <div className="relative mt-[16px] mr-[25px] ml-[20px] h-[29px] w-[30px]">
          <svg width="29" height="25" viewBox="0 0 29 25">
            <defs>
              <linearGradient id="c1" x1="0" y1="0" x2="0" y2="1"><stop offset="0" stopColor="#25b4f0" /><stop offset=".6" stopColor="#4fc08a" /><stop offset="1" stopColor="#f2c21a" /></linearGradient>
              <linearGradient id="c2" x1="0" y1="0" x2="0" y2="1"><stop offset="0" stopColor="#a05cf0" /><stop offset="1" stopColor="#f0708a" /></linearGradient>
            </defs>
            <path d="M6 1Q7 0 9 0H18L11 17Q10 20 7 20H3Q-1 20 .5 15Z" fill="url(#c1)" />
            <path d="M14 0H18Q21 0 22 4L23 8H18Q15.500 8 14.500 5Z" fill="#1f50d8" />
            <path d="M19 7H26Q29 8 28.500 11L26 20H14Z" fill="url(#c2)" />
          </svg>
          <div className="absolute right-0 bottom-0 flex h-[9px] w-[23px] items-center justify-center rounded-[2px] bg-[#fcc419] font-['Inter'] text-[8px] font-extrabold text-black">PRE</div>
        </div>
      </div>
    </div>
  );
}

export default function App() {
  return (
    <div className="relative flex h-[1080px] w-[1920px] flex-col overflow-hidden bg-white font-['Lato',sans-serif]">
      <TabStrip />
      <AddressBar />
      <SiteHeader />
      <TitleBar />
      <div className="flex h-[684px] shrink-0">
        <div className="flex w-[1901px] shrink-0 flex-col overflow-hidden">
          <Problem />
          <h2 className="mt-[56px] ml-[37.500px] text-[23px] leading-[34px] font-bold tracking-[-0.18px] text-[#5d5d7c]">Please select your Answer.</h2>
          <div className="mt-[10px] ml-[38px] flex h-[275px] w-[1831px] shrink-0 flex-col gap-[13px] rounded-[5px] border border-[#c0c0d0] pt-[13px] pl-[25px]">
            <Option value="32" />
            <Option value="35" />
            <Option value="36" />
            <Option value="37" checked />
          </div>
          <div className="mt-[4px] flex items-center justify-between pl-[4px]">
            <svg width="4" height="7" fill="#8f8f8f"><path d="M4 0V7L0 3.500Z" /></svg>
            <svg width="3" height="7" fill="#8f8f8f"><path d="M0 0V7L3 3.500Z" /></svg>
          </div>
        </div>
        <div className="flex w-[19px] flex-col items-center pl-[5px]">
          <svg className="mt-[6px]" width="7" height="4" fill="#8f8f8f"><path d="M0 4H7L3.500 0Z" /></svg>
          <div className="mt-[141px] h-[408px] w-[10px] bg-[#9e9c9c]" />
          <svg className="mt-[4px]" width="7" height="4" fill="#8f8f8f"><path d="M0 0H7L3.500 4Z" /></svg>
        </div>
      </div>
      <BottomNav />
      <Taskbar />
      <ChatWidget />
      <div className="absolute top-[139px] left-[1410px] flex flex-col gap-[20px]">
        <Toast kind="ok">
          <p className="tracking-[-0.07px]">Your issue has been reported</p>
          <p className="tracking-[-0.02px]">succesfully</p>
        </Toast>
        <Toast kind="error">
          <p className="tracking-[-0.01px]">Error in create or update solution,</p>
          <p className="tracking-[-0.2px]">No phase is active.</p>
        </Toast>
      </div>
    </div>
  );
}
